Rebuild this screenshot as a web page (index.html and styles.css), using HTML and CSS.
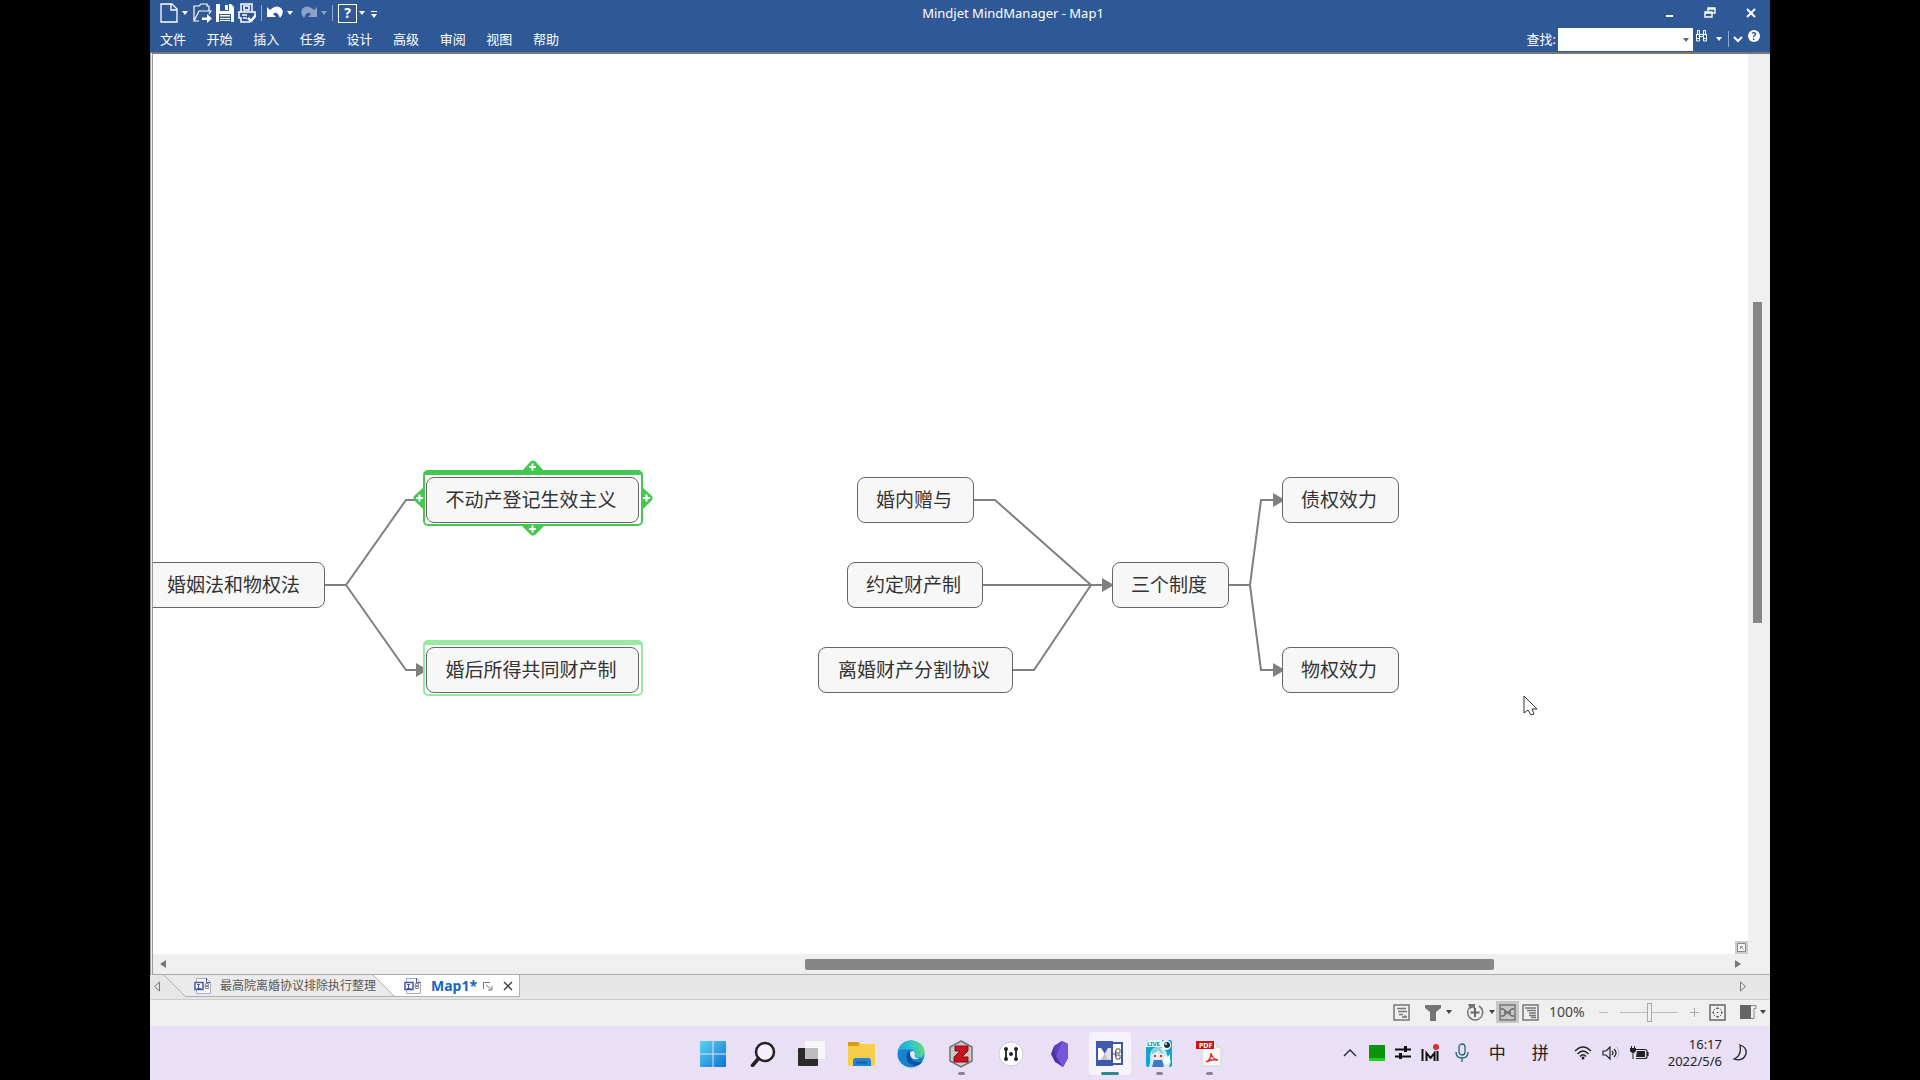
FILE: index.html
```html
<!DOCTYPE html>
<html lang="zh-CN">
<head>
<meta charset="utf-8">
<title>Mindjet MindManager - Map1</title>
<link rel="stylesheet" href="styles.css">
</head>
<body>
<div class="screen">
  <header class="header">
    <div class="titlebar">
      <div class="quick">
        <button class="tool" aria-label="新建"><svg width="18" height="20" viewBox="0 0 18 20"><path d="M1 1h11l5 5v13H1z M11 1v6h6" fill="none" stroke="#fff" stroke-width="1.3"/></svg></button>
        <button class="tool" aria-label="新建选项"><svg width="6" height="20"><path d="M0 8h6l-3 4z" fill="#fff"/></svg></button>
        <button class="tool" aria-label="打开"><svg width="20" height="20" viewBox="0 0 20 20"><path d="M7 18H2V3h5l2-2h6v2h2v5M2 18l5-10h12l-2 3" fill="none" stroke="#fff" stroke-width="1.2"/><path d="M10 14.500h5V11l5 4.500-5 4.500v-3h-5z" fill="#fff"/></svg></button>
        <button class="tool" aria-label="保存"><svg width="18" height="20" viewBox="0 0 18 20"><path d="M0 1h15l3 3v15H0z" fill="#fff"/><path d="M4 1h9v7H4zM3 11h12v8H3z" fill="#2f5897"/><path d="M9 2h3v5H9zM4 12h10v1.500H4zM4 15h10v1H4zM4 17h10v1H4z" fill="#fff"/></svg></button>
        <button class="tool" aria-label="打印"><svg width="18" height="20" viewBox="0 0 18 20"><path d="M3 9V1h11v8M6 3h5v4H6zM0 9h17v3M1 9v6h2v4h9M4 12h5M5 15h4" fill="none" stroke="#fff" stroke-width="1.500"/><path d="m10 15 3 3 5-6" fill="none" stroke="#fff" stroke-width="2.500"/></svg></button>
        <span class="sep"></span>
        <button class="tool" aria-label="撤销"><svg width="16" height="20" viewBox="0 0 16 20"><path d="M0 4v10h9L6 11q4-4 7 4 5-6 1-10-5-4-11 2z" fill="#fff"/></svg></button>
        <button class="tool" aria-label="撤销选项"><svg width="6" height="20"><path d="M0 8h6l-3 4z" fill="#fff"/></svg></button>
        <button class="tool dim" aria-label="重做"><svg width="20" height="20" viewBox="0 0 20 20"><path d="M20 4v10h-9l3-3q-4-4-7 4-5-6-1-10 5-4 11 2z" fill="#fff"/></svg></button>
        <button class="tool dim" aria-label="重做选项"><svg width="6" height="20"><path d="M0 8h6l-3 4z" fill="#fff"/></svg></button>
        <span class="sep"></span>
        <button class="tool help">?</button>
        <button class="tool help-more" aria-label="帮助选项"><svg width="6" height="20"><path d="M0 8h6l-3 4z" fill="#fff"/></svg></button>
        <button class="tool customize" aria-label="自定义"><svg width="6" height="20"><path d="M0 8h6v1H0zM0 11h6l-3 4z" fill="#fff"/></svg></button>
      </div>
      <h1 class="title">Mindjet MindManager - Map1</h1>
      <div class="window-buttons">
        <button class="tool" aria-label="最小化"><svg width="14" height="14"><path d="M4 9h7v2H4z" fill="#fff"/></svg></button>
        <button class="tool" aria-label="还原"><svg width="14" height="14"><path d="M5 5V2h7v5h-3M5 3h7M2 6h7v5H2zM2 7h7" fill="none" stroke="#fff" stroke-width="1.400"/></svg></button>
        <button class="tool" aria-label="关闭"><svg width="14" height="14"><path d="m3 3 8 8M11 3l-8 8" stroke="#fff" stroke-width="2"/></svg></button>
      </div>
    </div>
    <div class="menubar">
      <nav class="menus">
        <button>文件</button><button>开始</button><button>插入</button><button>任务</button><button>设计</button><button>高级</button><button>审阅</button><button>视图</button><button>帮助</button>
      </nav>
      <div class="search">
        <label for="find">查找:</label>
        <div class="search-box">
          <input id="find" type="text">
          <svg class="search-arrow" width="6" height="4"><path d="M0 0h6L3 4z" fill="#666"/></svg>
        </div>
        <div class="search-tools">
          <button class="tool raised" aria-label="查找"><svg width="13" height="12"><path d="M2.500 1v3M4.500 1v3M8.500 1v3M10.500 1v3M2 .5h3M8 .5h3M1.500 4.500h10M1.500 4v7h3V4M8.500 4v7h3V4M5 6.500h3M1 8.500h3M9 8.500h3" fill="none" stroke="#fff"/></svg></button>
          <button class="tool" aria-label="查找选项"><svg width="6" height="4"><path d="M0 0h6L3 4z" fill="#fff"/></svg></button>
          <span class="sep"></span>
          <button class="tool collapse" aria-label="折叠功能区"><svg width="10" height="8"><path d="m1 2 4 4 4-4" fill="none" stroke="#fff" stroke-width="2"/></svg></button>
          <button class="tool round raised">?</button>
        </div>
      </div>
    </div>
  </header>

  <main class="workspace">
    <section class="canvas">
      <svg class="links" width="100%" height="100%">
        <g fill="none" stroke="#808080" stroke-width="2">
          <path d="M172 531h21l60-85h14M193 531l60 85h12"/>
          <path d="M820 446h22l96 85h14M830 531h112M860 616h21l57-85"/>
          <path d="M1076 531h21l11-85h14M1097 531l11 85h14"/>
        </g>
        <path d="m263 609 12 7-12 7zM949 524l12 7-12 7zM1120 439l12 7-12 7zM1120 609l12 7-12 7z" fill="#808080"/>
      </svg>
      <div class="topic topic-law">婚姻法和物权法</div>
      <div class="halo halo-selected"></div>
      <svg class="handles" width="240" height="76" viewBox="0 0 240 76">
        <path d="m108 12 10-11q2-1 4 0l10 11zM108 65l10 10q2 1 4 0l10-10zM11 27 1 36q-1 2 0 4l10 10zM229 27l10 9q1 2 0 4l-10 10z" fill="#44c850"/>
        <path d="M116 7h7M119.500 3.500v7M116 69h7M119.500 65.500v7M3 38h7M6.500 34.500v7M230 38h7M233.500 34.500v7" stroke="#fff" stroke-width="2"/>
      </svg>
      <div class="topic topic-registration">不动产登记生效主义</div>
      <div class="halo halo-related"></div>
      <div class="topic topic-marital">婚后所得共同财产制</div>
      <div class="topic topic-gift">婚内赠与</div>
      <div class="topic topic-agreed">约定财产制</div>
      <div class="topic topic-divorce">离婚财产分割协议</div>
      <div class="topic topic-systems">三个制度</div>
      <div class="topic topic-debt">债权效力</div>
      <div class="topic topic-property">物权效力</div>
      <svg class="cursor" width="16" height="22"><path d="M1 1v17l4-3 3 5 3-1-2-5h5z" fill="#fff" stroke="#333"/></svg>
      <button class="overview" aria-label="概览"><svg width="13" height="13"><path d="M2.500 2.500h8v8h-8z" fill="#f4f4f4" stroke="#888"/><path d="M5.500 8V5.500H8M5.500 5.500l3 3" fill="none" stroke="#999"/></svg></button>
    </section>
    <div class="vscroll"><div class="vthumb"></div></div>
    <div class="hscroll">
      <svg width="8" height="10"><path d="M7 1v8L1 5z" fill="#777"/></svg>
      <div class="htrack"><div class="hthumb"></div></div>
      <svg width="8" height="10"><path d="M1 1v8l6-4z" fill="#777"/></svg>
    </div>
  </main>

  <div class="tabs">
    <button class="tool tab-nav" aria-label="上一个"><svg width="6" height="12"><path d="M5.500 1v9l-5-4.500z" fill="none" stroke="#777"/></svg></button>
    <div class="tab">
      <svg class="slope" width="22" height="22"><path d="M0 0h22v22z" fill="#ebebeb"/><path d="m0 0 22 22" stroke="#b0b0b0"/></svg>
      <button class="tab-body"><svg width="18" height="18"><path d="M2.500 1.500h10l4 4v11h-14z" fill="#fafafa" stroke="#a5add0"/><path d="M12.500 1v4.500h4" fill="none" stroke="#4459a8"/><path d="M1 5.500h8v7H1z" fill="#fff" stroke="#4459a8" stroke-width="1.500"/><path d="M3 7.500h3M4.500 7.500v4M3 11.500h4" stroke="#4459a8"/><path d="M9 9h2M11.500 6.500h3v2h-3zM11.500 9.500h3v2h-3z" fill="none" stroke="#8a8a8a"/></svg><span>最高院离婚协议排除执行整理</span></button>
    </div>
    <div class="tab active">
      <svg class="slope" width="22" height="22"><path d="M0 0h22v22z" fill="#fff"/><path d="m0 0 22 22" stroke="#b0b0b0"/></svg>
      <button class="tab-body"><svg width="18" height="18"><path d="M2.500 1.500h10l4 4v11h-14z" fill="#fafafa" stroke="#a5add0"/><path d="M12.500 1v4.500h4" fill="none" stroke="#4459a8"/><path d="M1 5.500h8v7H1z" fill="#fff" stroke="#4459a8" stroke-width="1.500"/><path d="M3 7.500h3M4.500 7.500v4M3 11.500h4" stroke="#4459a8"/><path d="M9 9h2M11.500 6.500h3v2h-3zM11.500 9.500h3v2h-3z" fill="none" stroke="#8a8a8a"/></svg><span>Map1*</span></button>
      <button class="tool" aria-label="浮动"><svg width="10" height="10"><path d="M.5 8V1.500H7M3 4l5 4M9 5v4H5" fill="none" stroke="#777"/></svg></button>
      <button class="tool" aria-label="关闭标签"><svg width="10" height="10"><path d="m1 1 8 8M9 1 1 9" stroke="#444" stroke-width="1.500"/></svg></button>
    </div>
    <button class="tool tab-nav tab-next" aria-label="下一个"><svg width="6" height="12"><path d="M.5 1v9l5-4.500z" fill="none" stroke="#777"/></svg></button>
  </div>

  <div class="status">
    <button class="tool" aria-label="任务信息"><svg width="17" height="17"><path d="M1 1h15v15H1z" fill="none" stroke="#777" stroke-width="1.500"/><path d="M4 4.500h9M5 7.500h9M6 10.500h4M12 11v3M9 13h5" stroke="#777" fill="none" stroke-width="1.300"/></svg></button>
    <button class="tool filter" aria-label="筛选"><svg width="16" height="17"><path d="M0 1h16v3l-5 4v9H5V8L0 4z" fill="#757575"/></svg><svg width="6" height="4"><path d="M0 0h6L3 4z" fill="#444"/></svg></button>
    <button class="tool rotate" aria-label="详细程度"><svg width="18" height="18"><path d="M4 4a7.500 7.500 0 1 0 9-1" fill="none" stroke="#757575" stroke-width="1.500"/><path d="M2 1h7v6L6.500 4.500 4 6z" fill="#757575"/><path d="M9 5v9M4.500 9.500h9" stroke="#666" stroke-width="2"/></svg><svg width="6" height="4"><path d="M0 0h6L3 4z" fill="#444"/></svg></button>
    <button class="tool view selected" aria-label="导图视图"><svg width="17" height="17"><path d="M1 1h15v15H1z" fill="none" stroke="#777" stroke-width="1.500"/><path d="M2 5h2l3 2M2 12h2l3-2M15 5h-2l-3 2M15 12h-2l-3-2" fill="none" stroke="#666" stroke-width="1.300"/><path d="M5 7h7v3H5z" fill="#777"/></svg></button>
    <button class="tool outline" aria-label="大纲视图"><svg width="17" height="17"><path d="M1 1h15v15H1z" fill="none" stroke="#777" stroke-width="1.500"/><path d="M3 4h11M5 6.500h9M7 9h7M7 11.500h7M9 13.500h5" stroke="#777" stroke-width="1.300"/></svg></button>
    <span class="percent">100%</span>
    <button class="tool minus" aria-label="缩小"><svg width="9" height="9"><path d="M0 4.500h9" stroke="#bbb"/></svg></button>
    <input class="zoom" type="range" aria-label="缩放">
    <button class="tool" aria-label="放大"><svg width="9" height="9"><path d="M0 4.500h9M4.500 0v9" stroke="#aaa"/></svg></button>
    <button class="tool fit" aria-label="适合页面"><svg width="17" height="17"><path d="M1 1h15v15H1z" fill="none" stroke="#666" stroke-width="1.500"/><path d="m8.500 3 2 2h-4zM8.500 14l2-2h-4zM3 8.500l2-2v4zM14 8.500l-2-2v4zM5 5h1v1H5zM11 5h1v1h-1zM5 11h1v1H5zM11 11h1v1h-1zM7.500 8h2v1h-2z" fill="#666"/></svg></button>
    <button class="tool panel" aria-label="任务窗格"><svg width="17" height="16"><path d="M0 1h11v14H0z" fill="#666"/><path d="M11 1.500h5v3h-2v10h-3" fill="none" stroke="#888"/></svg><svg width="6" height="4"><path d="M0 0h6L3 4z" fill="#444"/></svg></button>
  </div>

  <footer class="taskbar">
    <div class="apps">
      <button class="app" aria-label="开始"><svg width="26" height="26"><defs><linearGradient id="win" gradientUnits="userSpaceOnUse" x1="0" y1="0" x2="26" y2="26"><stop stop-color="#5fd3f6"/><stop offset="1" stop-color="#0a74cf"/></linearGradient></defs><path d="M0 1q0-1 1-1h11.500v12.500H0zM13.500 0H25q1 0 1 1v11.500H13.500zM0 13.500h12.500V26H1q-1 0-1-1zM13.500 13.500H26V25q0 1-1 1H13.500z" fill="url(#win)"/></svg></button>
      <button class="app" aria-label="搜索"><svg width="26" height="26"><circle cx="15" cy="11" r="9" fill="#f4f0fa" stroke="#222" stroke-width="2.500"/><path d="m8.500 17.500-6 7" stroke="#222" stroke-width="3.500" stroke-linecap="round"/></svg></button>
      <button class="app" aria-label="任务视图"><svg width="28" height="26"><path d="M0 8q0-1 1-1h19v17q0 1-1 1H1q-1 0-1-1z" fill="#2a2a2a"/><path d="M7 0h19q1 0 1 1v17H7z" fill="#fafafa" opacity=".9"/><path d="M7 7h13v11H7z" fill="#bdbdbd"/></svg></button>
      <button class="app" aria-label="文件资源管理器"><svg width="28" height="26"><path d="M0 2q0-1 1-1h9l2 2h14q1 0 1 1v20q0 1-1 1H1q-1 0-1-1z" fill="#f9cf4a"/><path d="M0 2q0-1 1-1h9l2 2-2 2H0z" fill="#d99b1a"/><path d="M5 25v-5q0-3 3-3h12q3 0 3 3v5z" fill="#1f83d4"/><path d="M8 21.500h11" stroke="#0b5fa5" stroke-width="2"/></svg></button>
      <button class="app" aria-label="Edge"><svg width="28" height="28"><defs><linearGradient id="edge" x1="0" y1="0.500" x2="1" y2="0.300"><stop stop-color="#1ba5dd"/><stop offset=".6" stop-color="#35c9c2"/><stop offset="1" stop-color="#68e05a"/></linearGradient></defs><circle cx="14" cy="14" r="13.500" fill="#1583d0"/><path d="M1 12C2 4 8 .5 14 .5c8 0 13.500 5 13.500 11 0 4-3 6-6 6-4 0-4-2-4-3 1-1 1-5-4-5C7 9.500 1 9 1 12z" fill="url(#edge)"/><path d="M11 12c-4 6 0 14 8 13.500 3 0 5-2 6.500-4-8 2.500-13-2-12-8 0-2-1-3-2.500-1.500z" fill="#124f9e"/><path d="M13 13c0 4 3 7 7 6l7.500-3q-2 2-6 2c-4 0-4-2-4-3 1-2 0-4-2-4-1.500 0-2.500 1-2.500 2z" fill="#f0e9fa"/></svg></button>
      <button class="app running" aria-label="Zotero"><svg width="26" height="28"><path d="M13 1 24 7v14l-11 6L2 21V7z" fill="#c9c9cc" stroke="#707078" stroke-width="1.500"/><path d="M7 6h13v5l-6 6h6v5H6v-5l6-6H7z" fill="#c8141e" stroke="#8c0b12"/></svg></button>
      <button class="app" aria-label="连接"><svg width="26" height="26"><circle cx="13" cy="13" r="12" fill="#fff" stroke="#ccc"/><path d="M8 9v8M18 9v8" stroke="#333" stroke-width="2"/><g fill="#222"><circle cx="8" cy="8" r="2"/><circle cx="8" cy="18" r="2"/><circle cx="18" cy="8" r="2"/><circle cx="18" cy="18" r="2"/><circle cx="13" cy="13" r="2"/></g></svg></button>
      <button class="app" aria-label="Obsidian"><svg width="18" height="26"><path d="M11 0 3 5 0 13l4 8 8 5 5-9V3z" fill="#4b35a6"/><path d="M11 0 5 15l7 11 5-9V3z" fill="#7456d8"/><path d="M11 0 5 15 3 5z" fill="#5d43bd"/></svg></button>
      <button class="app current" aria-label="MindManager"><svg width="28" height="26"><path d="M16 2h10v21H16z" fill="#fff" stroke="#3f57a8" stroke-width="2"/><path d="M0 0h17v25H0z" fill="#4058ae"/><path d="M2 7h3l4 6-4 6H2z" fill="#fff"/><path d="M15 7h-3l-7 12h10z" fill="#c4c4c4"/><path d="M15 7h-3l-3 6 3 6h3z" fill="#e2e2e2"/><path d="M20 8h4v4h-4zM20 14h4v4h-4zM17 13h2.500V10M19.500 13v3" fill="none" stroke="#555"/></svg></button>
      <button class="app running" aria-label="直播"><svg width="26" height="27"><rect width="26" height="27" rx="2" fill="#14a5c8"/><path d="M0 2q0-2 2-2h14v7H0z" fill="#e8f8fc"/><path d="M3 27q2-5 1-10 0-9 7-10 9 0 10 8l4 6-2 6z" fill="#c9ecf7"/><path d="M5 14q2-8 9-6l4 6-3-1-3-3-3 4z" fill="#7fcfe8"/><path d="M7 14l3-2 3 1 4 1v4q-5 4-9 0z" fill="#ffe7df"/><path d="M8 15h2v2H8zM14 15h2v2h-2z" fill="#b0344a"/><path d="M8 20h8l2 7H6z" fill="#3d79c3"/><circle cx="20" cy="5" r="5" fill="#fff"/><circle cx="21" cy="5" r="3" fill="#134"/><circle cx="20" cy="4" r="1" fill="#fff"/><path d="m17 21 2-6 2 3 3-4v8l-4 3z" fill="#fff"/><text x="1" y="6" class="live-text">LIVE</text></svg></button>
      <button class="app running" aria-label="PDF"><svg width="26" height="27"><path d="M6 3h14l5 5v18H6z" fill="#f7f7f5" stroke="#d8d4d0"/><path d="M20 3v5h5" fill="#ddd"/><path d="M10 22q5-2 5-9 1 6 7 7-6-1-12 2z" fill="none" stroke="#d6282c" stroke-width="1.300"/><path d="M0 1h18v8H0z" fill="#c9141b"/><text x="3" y="8" class="pdf-text">PDF</text></svg></button>
    </div>
    <div class="tray">
      <button class="tool" aria-label="显示隐藏的图标"><svg width="14" height="10"><path d="m1 8 6-6 6 6" fill="none" stroke="#222" stroke-width="1.300"/></svg></button>
      <span class="green"></span>
      <svg width="16" height="16"><path d="M0 4.500h16M0 11.500h16" stroke="#111" stroke-width="2"/><path d="M9 1h3v6H9zM4 8h3v6H4z" fill="#111"/></svg>
      <svg width="18" height="18"><path d="M1.500 5v12M5.500 17V9l4 5 4-5v8M16.500 7v10" fill="none" stroke="#111" stroke-width="2"/><circle cx="15" cy="3" r="3" fill="#d92c2c"/></svg>
      <svg class="mic" width="14" height="20"><rect x="4" y="1" width="6" height="11" rx="3" fill="none" stroke="#23667a" stroke-width="1.300"/><path d="M1 9q0 6 6 6t6-6M7 15v4" fill="none" stroke="#23667a" stroke-width="1.300"/></svg>
      <button class="ime">中</button>
      <button class="ime ime-mode">拼</button>
      <svg class="wifi" width="18" height="14"><path d="M1 5q8-8 16 0M3.500 8q5.500-6 11 0M6 10.500q3-3.500 6 0" fill="none" stroke="#222" stroke-width="1.300"/><circle cx="9" cy="12" r="1.500" fill="#222"/></svg>
      <svg width="18" height="14"><path d="M1 5h3l4-4v12L4 9H1zM10 5q2 2 0 4M12 3q4 4 0 8" fill="none" stroke="#222" stroke-width="1.200"/><path d="M14.500 1q5 6 0 12" fill="none" stroke="#bbb"/></svg>
      <svg width="19" height="14"><path d="M6 3.500h9q2 0 2 2v5q0 2-2 2H6M18 6v4" fill="none" stroke="#222" stroke-width="1.200"/><path d="M7 5h8v6H6z" fill="#222"/><path d="M0 2h6v3q-1 2-3 2T0 5zM1 0h1v2H1zM4 0h1v2H4zM2.500 7h1v6h-1z" fill="#222"/></svg>
      <div class="clock"><span>16:17</span><span>2022/5/6</span></div>
      <svg width="16" height="18"><path d="M8 1q7 2 6 9-3 8-12 5 8-3 6-14z" fill="none" stroke="#222" stroke-width="1.300"/></svg>
    </div>
  </footer>
</div>
</body>
</html>
```
FILE: styles.css
```css
* { box-sizing: border-box; }
body { margin: 0; background: #000; font-family: "Noto Sans", "Noto Sans CJK SC", sans-serif; }
button { margin: 0; padding: 0; border: 0; background: none; color: inherit; font: inherit; }
svg { display: block; flex: none; }
h1 { margin: 0; }

.screen { display: flex; flex-direction: column; min-height: 100vh; margin: 0 150px; background: #efefef; }
.tool { display: flex; align-items: center; flex: none; }
.dim { opacity: .45; }
.sep { width: 1px; height: 16px; margin: 0 1px; background: #8fa7cd; }

.header { height: 52px; background: #2f5897; color: #fff; }
.titlebar { display: grid; grid-template-columns: 1fr auto 1fr; align-items: center; height: 26px; padding: 0 12px 0 10px; }
.quick { display: flex; align-items: center; gap: 4px; }
.help { justify-content: center; width: 19px; height: 19px; border: 1px solid #fff; font-size: 14px; font-weight: 700; line-height: 14px; }
.help-more { margin-left: -2px; }
.customize { margin-left: 2px; }
.title { padding-left: 108px; font-size: 13px; font-weight: 400; line-height: 20px; }
.window-buttons { display: flex; justify-content: flex-end; gap: 27px; }
.menubar { display: flex; justify-content: space-between; align-items: center; height: 26px; padding: 0 10px; font-size: 13px; line-height: 18px; }
.menus { display: flex; justify-content: space-between; width: 399px; }
.search { display: flex; align-items: center; }
.search-box { position: relative; width: 135px; margin-left: 2px; }
.search-box input { display: block; width: 100%; height: 23px; border: 0; background: #fff; }
.search-arrow { position: absolute; right: 4px; top: 10px; }
.search-tools { display: flex; align-items: center; gap: 5px; padding-left: 2px; }
.search-tools .raised { margin-bottom: 6px; }
.search-tools .tool:nth-child(2) { margin-left: 3px; }
.search-tools .collapse { margin-left: -2px; }
.round { justify-content: center; width: 12px; height: 12px; border-radius: 50%; background: #fff; color: #2f5897; font-size: 10px; font-weight: 700; line-height: 12px; }

.workspace { flex: 1; display: grid; grid-template-columns: 1fr 22px; grid-template-rows: 1fr 20px; border: solid #777; border-width: 2px 0 1px; border-bottom-color: #aaa; border-left: 3px double #999; }
.canvas { position: relative; overflow: hidden; background: #fff; }
.links { position: absolute; left: 0; top: 0; }
.topic { position: absolute; display: flex; align-items: center; justify-content: center; width: 117px; height: 46px; padding-right: 3px; border: 1px solid #666; border-radius: 8px; background: #f7f7f7; color: #333; font-size: 19px; line-height: 28px; white-space: nowrap; }
.topic-law { left: -8px; top: 508px; width: 180px; }
.topic-registration { left: 273px; top: 423px; width: 213px; }
.topic-marital { left: 273px; top: 593px; width: 213px; }
.topic-gift { left: 704px; top: 423px; }
.topic-agreed { left: 694px; top: 508px; width: 136px; }
.topic-divorce { left: 665px; top: 593px; width: 195px; }
.topic-systems { left: 959px; top: 508px; }
.topic-debt { left: 1129px; top: 423px; }
.topic-property { left: 1129px; top: 593px; }
.halo { position: absolute; left: 270px; width: 220px; height: 56px; border: 2px solid #44c850; border-top-width: 5px; border-radius: 5px; background: #fff; }
.halo-selected { top: 416px; }
.halo-related { top: 586px; border-color: #96ec9e; }
.handles { position: absolute; left: 260px; top: 406px; }
.cursor { position: absolute; left: 1370px; top: 641px; }
.overview { position: absolute; right: 0; bottom: 0; background: #ccc; }
.vscroll { grid-row: span 2; padding: 248px 8px 0 5px; background: #efefef; }
.vthumb { height: 321px; background: #868686; }
.hscroll { display: flex; align-items: center; gap: 12px; padding: 0 6px; background: #efefef; }
.htrack { flex: 1; }
.hthumb { width: 44.600%; height: 11px; margin-left: 40.600%; border-radius: 2px; background: #868686; }

.tabs { display: flex; height: 25px; border-bottom: 1px solid #ccc; background: #e6e6e6; }
.tab-nav { padding: 0 4px; }
.tab { display: flex; height: 22px; }
.slope { margin-right: -1px; }
.tab-body { display: flex; align-items: center; gap: 8px; }
.tab:not(.active) .tab-body { width: 203px; padding-left: 9px; border-bottom: 1px solid #b0b0b0; background: #ebebeb; color: #555; font-size: 12px; line-height: 20px; white-space: nowrap; }
.tab.active { align-items: center; margin-left: -15px; padding-right: 6px; border: solid #b0b0b0; border-width: 0 1px 1px 0; background: linear-gradient(90deg, transparent 21px, #fff 21px); }
.tab.active .tab-body { padding: 0 6px 0 10px; gap: 9px; color: #1b65bd; font-size: 14px; font-weight: 700; line-height: 20px; }
.tab.active .tool + .tool { margin-left: 10px; }
.tab-next { margin-left: auto; padding-right: 24px; }

.status { display: flex; align-items: center; justify-content: flex-end; height: 26px; padding: 0 4px 2px 0; background: #efefef; }
.status .tool { gap: 5px; }
.filter { margin-left: 15px; }
.rotate { margin-left: 14px; }
.status .view { justify-content: center; width: 23px; height: 22px; margin-left: 1px; }
.selected { background: #c8c8c8; }
.outline { margin-left: 3px; }
.percent { width: 35px; margin-left: 10px; color: #444; font-size: 14px; line-height: 20px; }
.minus { margin-left: 15px; }
.zoom { appearance: none; width: 58px; height: 20px; margin: 0 12px; background: linear-gradient(#bbb, #bbb) center / 100% 1px no-repeat; }
.zoom::-webkit-slider-thumb { appearance: none; width: 5px; height: 19px; border: 1px solid #aaa; background: #eee; }
.fit { margin-left: 10px; }
.status .panel { gap: 3px; margin-left: 14px; }

.taskbar { display: grid; grid-template-columns: 1fr 540px 1fr; align-items: center; height: 54px; background: #e9e0f5; color: #222; }
.apps { grid-column: 2; display: flex; justify-content: space-between; padding: 1px 0 0 2px; }
.app { position: relative; display: flex; align-items: center; justify-content: center; width: 42px; height: 43px; border-radius: 4px; }
.current { background: #f7f3fc; }
.running::after, .current::after { content: ""; position: absolute; bottom: 0; left: 18px; width: 7px; height: 3px; border-radius: 2px; background: #8a8394; }
.current::after { left: 12px; width: 18px; background: #2e8a90; }
.live-text { fill: #1488ad; font-size: 6px; font-weight: 700; }
.pdf-text { fill: #fff; font-size: 7px; font-weight: 700; }
.tray { display: flex; align-items: center; justify-content: flex-end; gap: 10px; padding-right: 22px; }
.green { width: 16px; height: 16px; margin-left: 2px; border-bottom: 3px solid #1fd01f; background: #0f930f; }
.mic { margin-left: 6px; }
.ime { margin-left: 10px; font-size: 17px; line-height: 24px; }
.ime-mode { margin-left: 16px; }
.wifi { margin-left: 15px; }
.clock { display: flex; flex-direction: column; align-items: flex-end; margin-left: 9px; font-size: 13px; line-height: 17px; }
```
